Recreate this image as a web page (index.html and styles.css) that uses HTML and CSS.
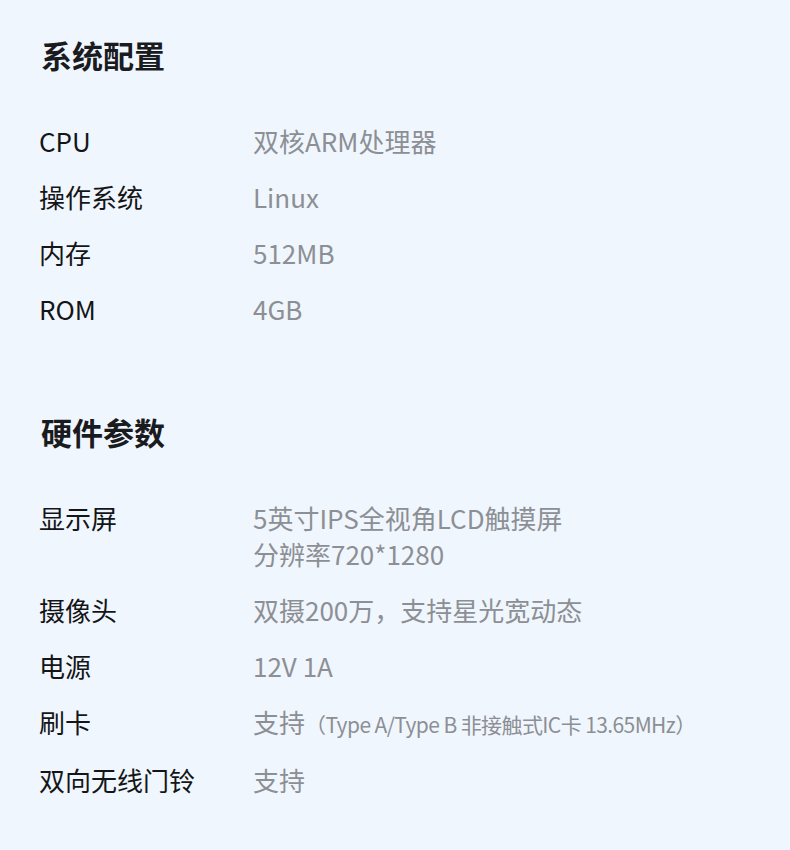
FILE: index.html
```html
<!DOCTYPE html>
<html lang="zh-CN">
<head>
<meta charset="utf-8">
<title>系统配置</title>
<link rel="stylesheet" href="styles.css">
</head>
<body>
<main class="page">
  <section class="section">
    <h2 class="title">系统配置</h2>
    <dl class="specs">
      <div class="row"><dt>CPU</dt><dd>双核ARM处理器</dd></div>
      <div class="row"><dt>操作系统</dt><dd>Linux</dd></div>
      <div class="row"><dt>内存</dt><dd>512MB</dd></div>
      <div class="row"><dt>ROM</dt><dd>4GB</dd></div>
    </dl>
  </section>
  <section class="section">
    <h2 class="title">硬件参数</h2>
    <dl class="specs">
      <div class="row"><dt>显示屏</dt><dd>5英寸IPS全视角LCD触摸屏<br>分辨率720*1280</dd></div>
      <div class="row"><dt>摄像头</dt><dd>双摄200万，支持星光宽动态</dd></div>
      <div class="row"><dt>电源</dt><dd>12V 1A</dd></div>
      <div class="row"><dt>刷卡</dt><dd>支持<span class="note">（Type A/Type B 非接触式IC卡 13.65MHz）</span></dd></div>
      <div class="row"><dt>双向无线门铃</dt><dd>支持</dd></div>
    </dl>
  </section>
</main>
</body>
</html>
```
FILE: styles.css
```css
* { box-sizing: border-box; }
html, body {
  margin: 0;
  padding: 0;
  background: #f0f6fd;
}
body {
  font-family: "Noto Sans CJK SC", "Noto Sans", sans-serif;
  color: #1c1c1e;
}
.page {
  padding: 35px 0 0 39px;
  display: flex;
  flex-direction: column;
  gap: 85px;
}
.section {
  display: flex;
  flex-direction: column;
  gap: 48px;
}
.title {
  margin: 0;
  font-size: 31px;
  line-height: 40px;
  font-weight: 700;
  color: #1a1b1e;
  padding-left: 2px;
}
.specs {
  margin: 0;
  display: flex;
  flex-direction: column;
  gap: 20px;
}
.row {
  display: grid;
  grid-template-columns: 214px 1fr;
  font-size: 26px;
  line-height: 36px;
}
.row dt {
  margin: 0;
  color: #141517;
  font-weight: 400;
}
.row dd {
  margin: 0;
  color: #8c8f94;
}
.note {
  font-size: 21px;
  letter-spacing: -0.6px;
}
```
